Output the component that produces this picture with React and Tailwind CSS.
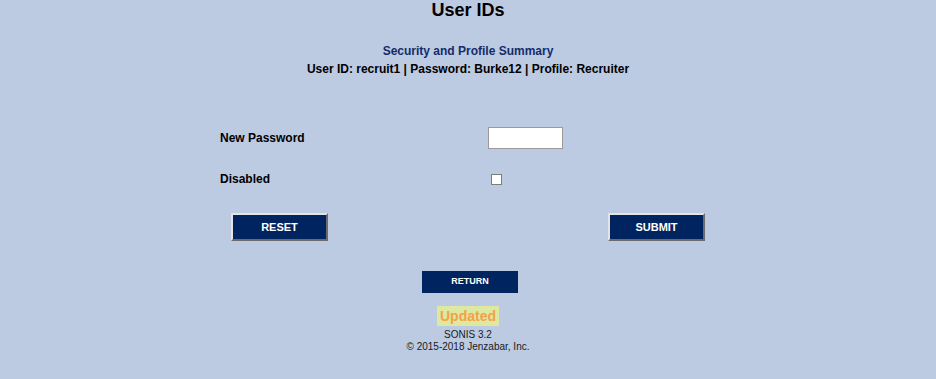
export default function App() {
  return (
    <div className="w-full min-h-[379px] bg-[#bccae2] text-black font-['Liberation_Sans',Arial,sans-serif]">
      <h1 className="text-center text-[18px] font-bold leading-[21px]">User IDs</h1>

      <div className="mt-[24px] text-center text-[12px] font-bold leading-[13px]">
        <p className="text-[#142c6b]">Security and Profile Summary</p>
        <p className="mt-[5px]">User ID: recruit1 | Password: Burke12 | Profile: Recruiter</p>
      </div>

      <div className="mx-auto mt-[51px] w-[496px]">
        <div className="flex items-center h-[22px]">
          <label className="w-[268px] text-[12px] font-bold leading-[14px]">New Password</label>
          <input
            type="password"
            className="w-[75px] h-[22px] border border-[#9a9a9a] bg-white outline-none"
          />
        </div>

        <div className="mt-[23px] flex items-center h-[14px]">
          <label className="w-[268px] text-[12px] font-bold leading-[14px]">Disabled</label>
          <span className="ml-[3px] block w-[11px] h-[11px] border border-[#7c7c7c] bg-white" />
        </div>

        <div className="mt-[27px] flex justify-between px-[11px]">
          <button className="w-[97px] h-[28px] bg-[#00245f] border-2 border-t-[#e4e4e4] border-l-[#e4e4e4] border-r-[#6b6b6b] border-b-[#6b6b6b] text-white text-[11px] font-bold">
            RESET
          </button>
          <button className="w-[97px] h-[28px] bg-[#00245f] border-2 border-t-[#e4e4e4] border-l-[#e4e4e4] border-r-[#6b6b6b] border-b-[#6b6b6b] text-white text-[11px] font-bold">
            SUBMIT
          </button>
        </div>
      </div>

      <div className="mt-[29px] flex justify-center pl-[4px]">
        <button className="w-[98px] h-[24px] bg-[#00245f] border border-[#bccae2] text-white text-[9px] font-bold">
          RETURN
        </button>
      </div>

      <div className="mt-[12px] flex justify-center">
        <span className="px-[3px] py-[2px] bg-[#dde9a0] text-[#f5a04a] text-[14px] font-bold leading-[16px]">
          Updated
        </span>
      </div>

      <div className="mt-[3px] text-center text-[10px] leading-[12px] text-[#1a1a1a]">
        <p>SONIS 3.2</p>
        <p>© 2015-2018 Jenzabar, Inc.</p>
      </div>
    </div>
  )
}
